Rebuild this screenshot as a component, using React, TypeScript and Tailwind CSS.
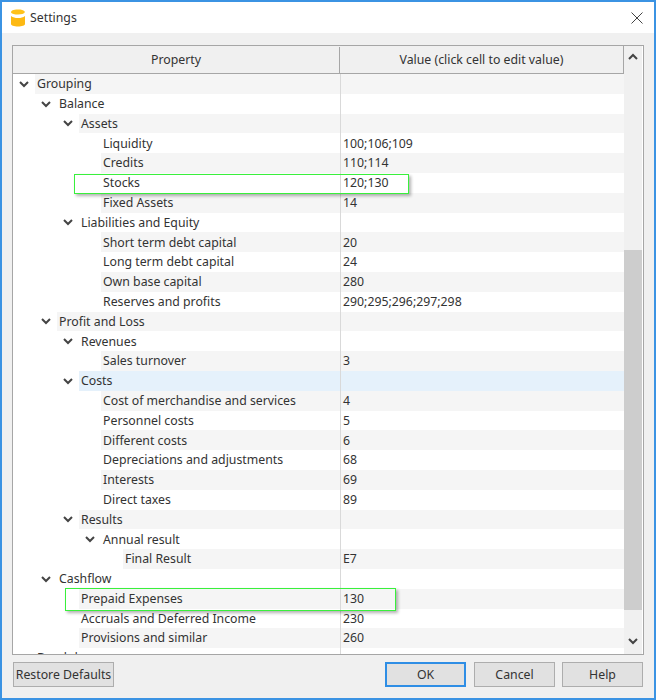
const rows: { label: string; value?: string; depth: number; open?: boolean; active?: boolean }[] = [
  { label: 'Grouping', depth: 0, open: true },
  { label: 'Balance', depth: 1, open: true },
  { label: 'Assets', depth: 2, open: true },
  { label: 'Liquidity', value: '100;106;109', depth: 3 },
  { label: 'Credits', value: '110;114', depth: 3 },
  { label: 'Stocks', value: '120;130', depth: 3 },
  { label: 'Fixed Assets', value: '14', depth: 3 },
  { label: 'Liabilities and Equity', depth: 2, open: true },
  { label: 'Short term debt capital', value: '20', depth: 3 },
  { label: 'Long term debt capital', value: '24', depth: 3 },
  { label: 'Own base capital', value: '280', depth: 3 },
  { label: 'Reserves and profits', value: '290;295;296;297;298', depth: 3 },
  { label: 'Profit and Loss', depth: 1, open: true },
  { label: 'Revenues', depth: 2, open: true },
  { label: 'Sales turnover', value: '3', depth: 3 },
  { label: 'Costs', depth: 2, open: true, active: true },
  { label: 'Cost of merchandise and services', value: '4', depth: 3 },
  { label: 'Personnel costs', value: '5', depth: 3 },
  { label: 'Different costs', value: '6', depth: 3 },
  { label: 'Depreciations and adjustments', value: '68', depth: 3 },
  { label: 'Interests', value: '69', depth: 3 },
  { label: 'Direct taxes', value: '89', depth: 3 },
  { label: 'Results', depth: 2, open: true },
  { label: 'Annual result', depth: 3, open: true },
  { label: 'Final Result', value: 'E7', depth: 4 },
  { label: 'Cashflow', depth: 1, open: true },
  { label: 'Prepaid Expenses', value: '130', depth: 2 },
  { label: 'Accruals and Deferred Income', value: '230', depth: 2 },
  { label: 'Provisions and similar', value: '260', depth: 2 },
  // only the top of this row peeks out above the frame
  { label: 'Breakdown', depth: 0 },
]

function Chevron({ up, className }: { up?: boolean; className?: string }) {
  return (
    <svg className={className} width="10" height="7" viewBox="0 0 10 7" fill="none" stroke="#444444" strokeWidth={2}>
      <path d={up ? 'M1 6l4-4 4 4' : 'M1 1l4 4 4-4'} />
    </svg>
  )
}

function TreeRow({ row, index }: { row: (typeof rows)[number]; index: number }) {
  const odd = index % 2 === 0
  const bg = row.active ? 'bg-[#e5f1fb]' : odd ? 'bg-[#f5f5f5]' : 'bg-white'
  const indents = ['pl-[6px]', 'pl-[28px]', 'pl-[50px]', 'pl-[72px]', 'pl-[94px]']
  return (
    <div className="flex h-[19.8px] shrink-0">
      <div className={`flex w-[327px] shrink-0 items-center ${indents[row.depth]}`}>
        <div className="flex w-[10px] shrink-0 items-center justify-center pt-[1px]">
          {row.open && <Chevron />}
        </div>
        <div className={`ml-[6px] flex h-full flex-1 items-center pl-[2px] pt-[1px] ${bg}`}>
          <span className="whitespace-nowrap">{row.label}</span>
        </div>
      </div>
      <div className={`flex flex-1 items-center border-l border-[#d9d9d9] pl-[2px] pt-[1px] ${bg}`}>{row.value}</div>
    </div>
  )
}

function DialogButton({ label, primary, className }: { label: string; primary?: boolean; className?: string }) {
  return (
    <button
      className={`flex h-[25px] items-center justify-center whitespace-nowrap border bg-[#e1e1e1] pt-[2px] text-[#333333] ${
        primary ? 'border-[#2f8ee5] shadow-[inset_0_0_0_1px_#2f8ee5]' : 'border-[#adadad]'
      } ${className ?? ''}`}
    >
      {label}
    </button>
  )
}

export default function App() {
  return (
    <div
      className="relative flex h-[700px] w-[656px] flex-col overflow-hidden border-2 border-[#3b93e3] bg-[#f0f0f0] text-[12.3px] text-[#333333]"
      style={{ fontFamily: '"Noto Sans", "Open Sans", sans-serif' }}
    >
      {/* Title bar */}
      <div className="flex h-[31px] shrink-0 items-center bg-white">
        <svg className="ml-[9px]" width="14" height="18" viewBox="0 0 14 18">
          <path d="M0 3.500C0 1.500 2 .5 7 .5c3 0 6 .6 7 2.500-1 1.800-3.500 2.500-7 2.500S1 5 0 3.500z" fill="#ffc21a" />
          <path d="M0 7c2 1.500 4 2 7 2s5-.5 7-2v8c0 1.500-3 2.500-7 2.500S0 16.500 0 15z" fill="#fdb913" />
        </svg>
        <span className="ml-[5px] pt-[1px]">Settings</span>
        <svg className="ml-auto mr-[11px]" width="12" height="12" viewBox="0 0 12 12" stroke="#444444" strokeWidth={1} fill="none">
          <path d="M.5.5l11 11M11.500.5l-11 11" />
        </svg>
      </div>

      {/* Property table */}
      <div className="mx-[10px] mt-[12px] flex h-[610px] shrink-0 border border-[#a6a6a6] bg-white">
        <div className="flex w-[611px] shrink-0 flex-col overflow-hidden">
          <div className="flex h-[28px] shrink-0 border border-t-0 border-l-0 border-[#a6a6a6] bg-[#f0f0f0] pt-[1px]">
            <div className="flex w-[327px] shrink-0 items-center justify-center border-r border-[#a6a6a6]">Property</div>
            <div className="flex flex-1 items-center justify-center">Value (click cell to edit value)</div>
          </div>
          {rows.map((row, i) => (
            <TreeRow key={row.label} row={row} index={i} />
          ))}
        </div>
        {/* Scrollbar */}
        <div className="flex w-[18px] shrink-0 flex-col items-center bg-[#f0f0f0]">
          <Chevron up className="mt-[7px]" />
          <div className="mt-[190px] h-[360px] w-full bg-[#cdcdcd]" />
          <Chevron className="mt-[28px]" />
        </div>
      </div>

      {/* Callouts drawn over the screenshot */}
      <div className="absolute left-[72px] top-[172px] h-[20px] w-[335px] border border-[#39f03c] shadow-[2px_2px_3px_rgba(0,0,0,0.3)]" />
      <div className="absolute left-[63px] top-[586px] h-[23px] w-[331px] border border-[#39f03c] shadow-[2px_2px_3px_rgba(0,0,0,0.3)]" />

      {/* Footer buttons */}
      <div className="mx-[11px] mt-[7px] flex">
        <DialogButton label="Restore Defaults" className="w-[101px]" />
        <DialogButton label="OK" primary className="ml-auto w-[81px]" />
        <DialogButton label="Cancel" className="ml-[8px] w-[81px]" />
        <DialogButton label="Help" className="ml-[7px] w-[81px]" />
      </div>
    </div>
  )
}
